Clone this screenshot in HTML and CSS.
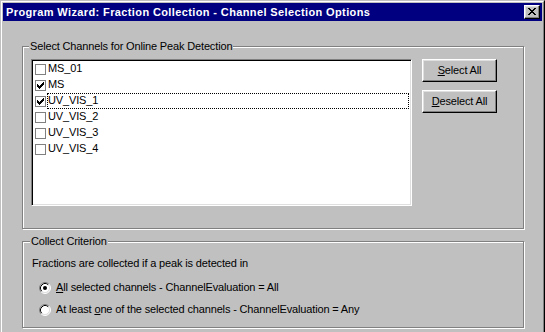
FILE: index.html
```html
<!DOCTYPE html>
<html>
<head>
<meta charset="utf-8">
<link rel="stylesheet" href="styles.css">
</head>
<body>
<div class="window">
  <div class="frame">
    <div class="titlebar">
      <span class="title">Program Wizard: Fraction Collection - Channel Selection Options</span>
      <span class="close">
        <svg width="8" height="7" viewBox="0 0 8 7" shape-rendering="crispEdges">
          <g fill="#000">
            <rect x="0" y="0" width="2" height="1"/><rect x="6" y="0" width="2" height="1"/>
            <rect x="1" y="1" width="2" height="1"/><rect x="5" y="1" width="2" height="1"/>
            <rect x="2" y="2" width="4" height="1"/>
            <rect x="3" y="3" width="2" height="1"/>
            <rect x="2" y="4" width="4" height="1"/>
            <rect x="1" y="5" width="2" height="1"/><rect x="5" y="5" width="2" height="1"/>
            <rect x="0" y="6" width="2" height="1"/><rect x="6" y="6" width="2" height="1"/>
          </g>
        </svg>
      </span>
    </div>
    <div class="content">
      <fieldset class="group group-channels">
        <legend>Select Channels for Online Peak Detection</legend>
        <div class="channels-body">
          <div class="listbox">
            <div class="row"><span class="cb"></span><span class="item">MS_01</span></div>
            <div class="row"><span class="cb checked"><svg width="7" height="7" viewBox="0 0 7 7" shape-rendering="crispEdges"><g fill="#000"><rect x="6" y="0" width="1" height="1"/><rect x="5" y="1" width="2" height="1"/><rect x="0" y="2" width="1" height="1"/><rect x="4" y="2" width="3" height="1"/><rect x="0" y="3" width="2" height="1"/><rect x="3" y="3" width="3" height="1"/><rect x="0" y="4" width="5" height="1"/><rect x="1" y="5" width="3" height="1"/><rect x="2" y="6" width="1" height="1"/></g></svg></span><span class="item">MS</span></div>
            <div class="row"><span class="cb checked"><svg width="7" height="7" viewBox="0 0 7 7" shape-rendering="crispEdges"><g fill="#000"><rect x="6" y="0" width="1" height="1"/><rect x="5" y="1" width="2" height="1"/><rect x="0" y="2" width="1" height="1"/><rect x="4" y="2" width="3" height="1"/><rect x="0" y="3" width="2" height="1"/><rect x="3" y="3" width="3" height="1"/><rect x="0" y="4" width="5" height="1"/><rect x="1" y="5" width="3" height="1"/><rect x="2" y="6" width="1" height="1"/></g></svg></span><span class="item focused">UV_VIS_1</span></div>
            <div class="row"><span class="cb"></span><span class="item">UV_VIS_2</span></div>
            <div class="row"><span class="cb"></span><span class="item">UV_VIS_3</span></div>
            <div class="row"><span class="cb"></span><span class="item">UV_VIS_4</span></div>
          </div>
          <div class="buttons">
            <span class="btn"><u>S</u>elect All</span>
            <span class="btn"><u>D</u>eselect All</span>
          </div>
        </div>
      </fieldset>
      <fieldset class="group group-criterion">
        <legend>Collect Criterion</legend>
        <p class="intro">Fractions are collected if a peak is detected in</p>
        <div class="radio">
          <svg class="rb" width="12" height="12" viewBox="0 0 12 12">
            <circle cx="6" cy="6" r="5" fill="#fff"/>
            <path d="M2.11 9.89 A5.5 5.5 0 0 1 9.89 2.11" fill="none" stroke="#808080"/>
            <path d="M9.89 2.11 A5.5 5.5 0 0 1 2.11 9.89" fill="none" stroke="#fff"/>
            <path d="M2.82 9.18 A4.5 4.5 0 0 1 9.18 2.82" fill="none" stroke="#000"/>
            <path d="M9.18 2.82 A4.5 4.5 0 0 1 2.82 9.18" fill="none" stroke="#dfdfdf"/>
            <circle cx="6" cy="6" r="2" fill="#000"/>
          </svg>
          <span><u>A</u>ll selected channels - ChannelEvaluation = All</span>
        </div>
        <div class="radio">
          <svg class="rb" width="12" height="12" viewBox="0 0 12 12">
            <circle cx="6" cy="6" r="5" fill="#fff"/>
            <path d="M2.11 9.89 A5.5 5.5 0 0 1 9.89 2.11" fill="none" stroke="#808080"/>
            <path d="M9.89 2.11 A5.5 5.5 0 0 1 2.11 9.89" fill="none" stroke="#fff"/>
            <path d="M2.82 9.18 A4.5 4.5 0 0 1 9.18 2.82" fill="none" stroke="#000"/>
            <path d="M9.18 2.82 A4.5 4.5 0 0 1 2.82 9.18" fill="none" stroke="#dfdfdf"/>
          </svg>
          <span>At least <u>o</u>ne of the selected channels - ChannelEvaluation = Any</span>
        </div>
      </fieldset>
    </div>
  </div>
</div>
</body>
</html>
```

FILE: styles.css
```css
html, body {
  margin: 0;
  padding: 0;
  overflow: hidden;
  background: #c0c0c0;
}

body {
  font-family: "Liberation Sans", Arial, sans-serif;
  font-size: 11px;
  line-height: 13px;
  letter-spacing: -0.15px;
  color: #000;
}

.window {
  width: 545px;
  height: 345px;
  box-sizing: border-box;
  border: 1px solid;
  border-color: #c0c0c0 #000 #000 #c0c0c0;
}

.frame {
  height: 100%;
  box-sizing: border-box;
  border: 1px solid;
  border-color: #fff #808080 #808080 #fff;
  padding: 1px;
}

.titlebar {
  height: 18px;
  background: #000080;
  display: flex;
  align-items: center;
  justify-content: space-between;
  padding: 0 2px 0 3px;
}

.title {
  color: #fff;
  font-weight: bold;
  letter-spacing: 0.38px;
  white-space: nowrap;
}

.close {
  width: 16px;
  height: 14px;
  box-sizing: border-box;
  background: #c0c0c0;
  border: 1px solid;
  border-color: #fff #000 #000 #fff;
  box-shadow: inset -1px -1px #808080, inset 1px 1px #dfdfdf;
  display: flex;
  align-items: center;
  justify-content: center;
  padding: 0 1px 1px 0;
}

.close svg { display: block; }

.content {
  padding: 19px 0 0 19px;
}

.group {
  margin: 0;
  width: 502px;
  box-sizing: border-box;
  border: 1px solid #808080;
  box-shadow: inset 1px 1px #fff, 1px 1px #fff;
  min-width: 0;
}

.group legend {
  padding: 0 1px;
  margin-left: -2px;
  background: #c0c0c0;
  line-height: 13px;
}

.group-channels {
  padding: 6px 8px 22px 8px;
}

.channels-body {
  display: flex;
  gap: 10px;
}

.listbox {
  width: 381px;
  height: 147px;
  box-sizing: border-box;
  background: #fff;
  border: 1px solid;
  border-color: #808080 #fff #fff #808080;
  box-shadow: inset 1px 1px #000, inset -1px -1px #dfdfdf;
  padding: 1px 2px 0 2px;
}

.row {
  height: 16px;
  display: flex;
  align-items: flex-start;
}

.cb {
  width: 11px;
  height: 11px;
  box-sizing: border-box;
  border: 1px solid #808080;
  background: #fff;
  margin: 3px 1px 0 1px;
  display: flex;
  align-items: center;
  justify-content: center;
  flex: none;
}

.cb svg { display: block; }

.item {
  flex: 1;
  height: 16px;
  box-sizing: border-box;
  border: 1px solid transparent;
  line-height: 13px;
  white-space: nowrap;
}

.item.focused {
  border: 1px dotted #000;
}

.buttons {
  display: flex;
  flex-direction: column;
  gap: 8px;
}

.btn {
  width: 75px;
  height: 23px;
  box-sizing: border-box;
  border: 1px solid;
  border-color: #fff #000 #000 #fff;
  box-shadow: inset -1px -1px #808080, inset 1px 1px #dfdfdf;
  display: flex;
  align-items: center;
  justify-content: center;
  padding-bottom: 1px;
}

.group-criterion {
  margin-top: 6px;
  padding: 9px 8px 11px 9px;
}

.intro {
  margin: 0;
}

.radio {
  display: flex;
  align-items: center;
  gap: 5px;
  padding-left: 7px;
  margin-top: 11px;
  height: 13px;
}

.radio + .radio {
  margin-top: 9px;
}

.rb { display: block; flex: none; }
```
